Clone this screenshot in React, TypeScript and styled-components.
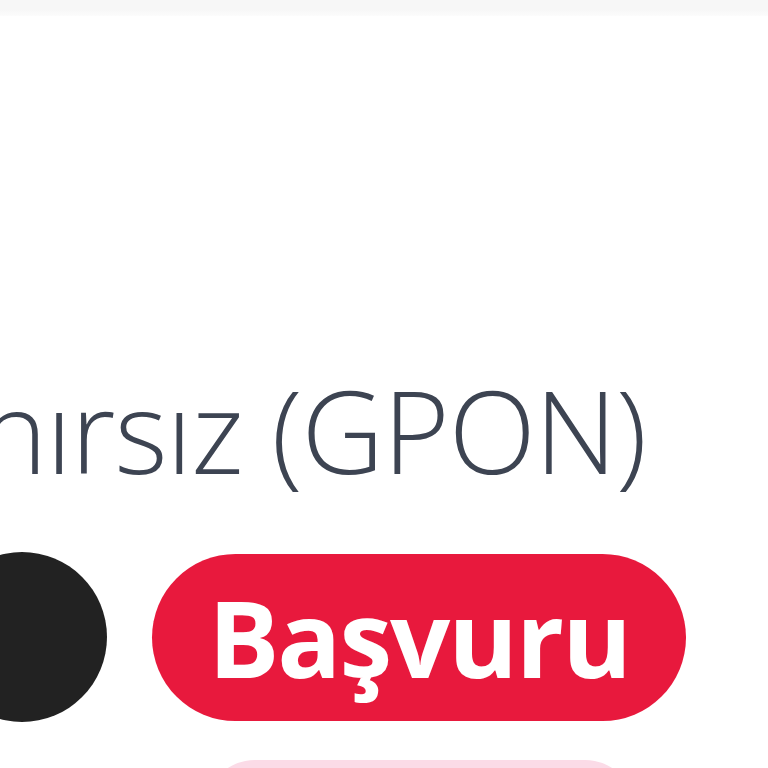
import styled, { createGlobalStyle } from 'styled-components'

const GlobalStyle = createGlobalStyle`
  html, body {
    margin: 0;
    padding: 0;
    background: #ffffff;
    overflow: hidden;
  }
`;

export const App: React.FC = () => {
  return (
    <Page>
      <GlobalStyle />
      <TopBar />
      <Content>
        <Title>nırsız (GPON)</Title>
        <ActionRow>
          <Dot />
          <ApplyButton>Başvuru</ApplyButton>
        </ActionRow>
        <NextButton />
      </Content>
    </Page>
  )
}

const Page = styled.div`
  width: 768px;
  height: 768px;
  overflow: hidden;
  background: #ffffff;
`;

const TopBar = styled.div`
  height: 16px;
  background: linear-gradient(#f7f7f7 60%, #fcfcfc);
`;

const Content = styled.div`
  display: flex;
  flex-direction: column;
  padding-top: 344px;
`;

const Title = styled.div`
  margin-left: -20px;
  font-family: "Open Sans", "DejaVu Sans", sans-serif;
  font-weight: 300;
  font-size: 114px;
  line-height: 140px;
  color: #3d4452;
  white-space: nowrap;
  letter-spacing: -1px;
`;

const ActionRow = styled.div`
  display: flex;
  align-items: center;
  gap: 45px;
  margin-top: 52px;
  margin-left: -63px;
`;

const Dot = styled.div`
  width: 170px;
  height: 170px;
  border-radius: 50%;
  background: #222222;
  flex-shrink: 0;
`;

const ApplyButton = styled.div`
  display: flex;
  align-items: center;
  justify-content: center;
  width: 534px;
  height: 167px;
  border-radius: 84px;
  background: #e8193d;
  color: #ffffff;
  font-family: "Open Sans", "DejaVu Sans", sans-serif;
  font-weight: 700;
  font-size: 106px;
  letter-spacing: -2px;
  flex-shrink: 0;
`;

const NextButton = styled.div`
  margin: 38px 0 0 205px;
  width: 430px;
  height: 100px;
  border-radius: 50px;
  background: #fbdbe7;
`;

export default App;
